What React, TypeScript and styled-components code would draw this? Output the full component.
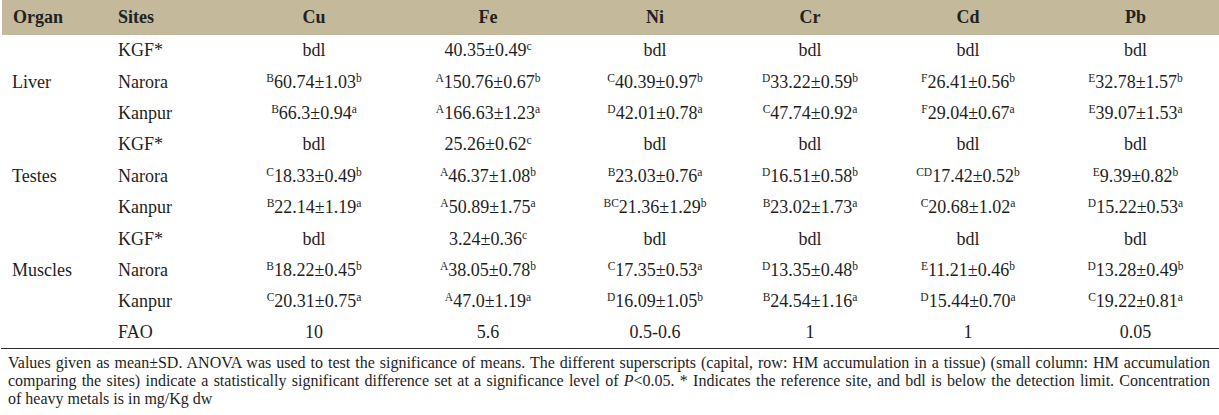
import React from "react";
import styled, { createGlobalStyle } from "styled-components";

const Global = createGlobalStyle`
  html, body { margin: 0; padding: 0; background: #ffffff; }
  body { font-family: "Liberation Serif", "Times New Roman", serif; color: #1e1e1e; }
`;

const Wrap = styled.div`
  width: 1219px;
`;

const Table = styled.table`
  width: 1219px;
  border-collapse: collapse;
  table-layout: fixed;
  font-family: "Liberation Serif", "Times New Roman", serif;
  font-size: 18px;
  border-bottom: 1px solid #2a2a2a;
`;

const HeadRow = styled.tr`
  height: 35px;
  background: #c4ba9b;
`;

const HeadCell = styled.th<{ $left?: boolean; $edge?: boolean }>`
  padding: 0 0 0 ${(p) => (p.$left ? "11px" : "0")};
  text-align: ${(p) => (p.$left ? "left" : "center")};
  font-weight: bold;
  color: #222;
  vertical-align: middle;
  border-left: ${(p) => (p.$edge ? "2px solid #ffffff" : "none")};
`;

const Row = styled.tr`
  height: 31.4px;
`;

const Cell = styled.td<{ $left?: boolean }>`
  padding: 0 0 0 ${(p) => (p.$left ? "11px" : "0")};
  text-align: ${(p) => (p.$left ? "left" : "center")};
  vertical-align: middle;
  white-space: nowrap;
  color: #1e1e1e;
`;

const Sup = styled.sup`
  font-size: 11.5px;
  vertical-align: 0.5em;
  line-height: 0;
`;

const Note = styled.p`
  margin: 0;
  padding: 5px 9px 0 8px;
  font-size: 16px;
  line-height: 18px;
  text-align: justify;
  color: #1e1e1e;
`;

const Value: React.FC<{ v: string }> = ({ v }) => {
  const [pre, main, post] = v.includes("|") ? v.split("|") : ["", v, ""];
  return (
    <>
      {pre && <Sup>{pre}</Sup>}
      {main}
      {post && <Sup>{post}</Sup>}
    </>
  );
};

type Group = { organ: string; rows: { site: string; vals: string[] }[] };

const bdl = "bdl";
const groups: Group[] = [
  {
    organ: "Liver",
    rows: [
      { site: "KGF*", vals: [bdl, "|40.35±0.49|c", bdl, bdl, bdl, bdl] },
      { site: "Narora", vals: ["B|60.74±1.03|b", "A|150.76±0.67|b", "C|40.39±0.97|b", "D|33.22±0.59|b", "F|26.41±0.56|b", "E|32.78±1.57|b"] },
      { site: "Kanpur", vals: ["B|66.3±0.94|a", "A|166.63±1.23|a", "D|42.01±0.78|a", "C|47.74±0.92|a", "F|29.04±0.67|a", "E|39.07±1.53|a"] },
    ],
  },
  {
    organ: "Testes",
    rows: [
      { site: "KGF*", vals: [bdl, "|25.26±0.62|c", bdl, bdl, bdl, bdl] },
      { site: "Narora", vals: ["C|18.33±0.49|b", "A|46.37±1.08|b", "B|23.03±0.76|a", "D|16.51±0.58|b", "CD|17.42±0.52|b", "E|9.39±0.82|b"] },
      { site: "Kanpur", vals: ["B|22.14±1.19|a", "A|50.89±1.75|a", "BC|21.36±1.29|b", "B|23.02±1.73|a", "C|20.68±1.02|a", "D|15.22±0.53|a"] },
    ],
  },
  {
    organ: "Muscles",
    rows: [
      { site: "KGF*", vals: [bdl, "|3.24±0.36|c", bdl, bdl, bdl, bdl] },
      { site: "Narora", vals: ["B|18.22±0.45|b", "A|38.05±0.78|b", "C|17.35±0.53|a", "D|13.35±0.48|b", "E|11.21±0.46|b", "D|13.28±0.49|b"] },
      { site: "Kanpur", vals: ["C|20.31±0.75|a", "A|47.0±1.19|a", "D|16.09±1.05|b", "B|24.54±1.16|a", "D|15.44±0.70|a", "C|19.22±0.81|a"] },
    ],
  },
];

const fao = ["10", "5.6", "0.5-0.6", "1", "1", "0.05"];
const metals = ["Cu", "Fe", "Ni", "Cr", "Cd", "Pb"];
const widths = [106, 120, 174, 174, 160, 150, 166, 169];

export default function App() {
  return (
    <Wrap>
      <Global />
      <Table>
        <colgroup>
          {widths.map((w, i) => (
            <col key={i} style={{ width: w }} />
          ))}
        </colgroup>
        <thead>
          <HeadRow>
            <HeadCell $left $edge>Organ</HeadCell>
            <HeadCell $left>Sites</HeadCell>
            {metals.map((m) => (
              <HeadCell key={m}>{m}</HeadCell>
            ))}
          </HeadRow>
        </thead>
        <tbody>
          {groups.map((g) =>
            g.rows.map((r, i) => (
              <Row key={g.organ + r.site}>
                {i === 0 && (
                  <Cell $left rowSpan={3}>
                    {g.organ}
                  </Cell>
                )}
                <Cell $left>{r.site}</Cell>
                {r.vals.map((v, j) => (
                  <Cell key={j}>
                    <Value v={v} />
                  </Cell>
                ))}
              </Row>
            ))
          )}
          <Row>
            <Cell $left />
            <Cell $left>FAO</Cell>
            {fao.map((v, j) => (
              <Cell key={j}>{v}</Cell>
            ))}
          </Row>
        </tbody>
      </Table>
      <Note>
        Values given as mean±SD. ANOVA was used to test the significance of means. The different superscripts (capital, row: HM accumulation in a tissue) (small column: HM accumulation comparing the sites) indicate a statistically significant difference set at a significance level of <i>P</i>&lt;0.05. * Indicates the reference site, and bdl is below the detection limit. Concentration of{"\u00A0"}heavy metals is in mg/Kg dw
      </Note>
    </Wrap>
  );
}
